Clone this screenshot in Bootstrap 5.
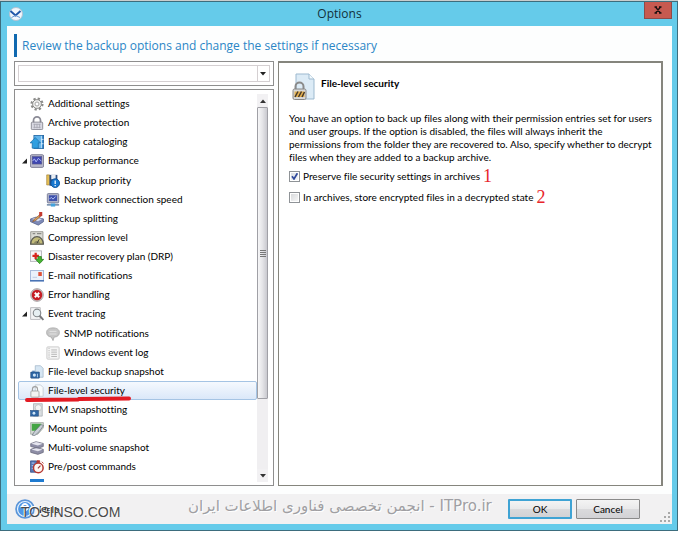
<!DOCTYPE html>
<html lang="en">
<head>
<meta charset="utf-8">
<meta name="viewport" content="width=device-width, initial-scale=1">
<title>Options</title>
<link href="https://cdn.jsdelivr.net/npm/bootstrap@5.3.0/dist/css/bootstrap.min.css" rel="stylesheet">
<style>
  :root { --ui: Lato, "Open Sans", sans-serif; --head: "Open Sans", "Noto Sans", sans-serif; }
  body { font: 10px/13px var(--ui); font-variant-ligatures: none; color: #000; background: #fff; border-top: 1px solid #c9cdcd; padding-bottom: 2px; }
  .dialog { background: #65cbea; border: 1px solid #3d6d7d; padding: 0 5px 6px 6px; }
  .titlebar { height: 24px; padding: 0 0 0 2px; }
  .titlebar h1 { font: 12px/24px var(--head); color: #12303b; }
  .close-btn { position: absolute; top: 0; right: 0; width: 28px; height: 17px; background: #c75a50; border: 1px solid #8f4a48; border-top: 0; }
  .client { background: #fdfefe; }
  .banner { margin: 8px 8px 4px 7px; }
  .banner h2 { font: 12px/23px var(--head); color: #2b86c6; border-left: 3px solid #0f69b0; padding-left: 5px; }
  .panes { padding: 0 9px 8px 7px; gap: 4px; }
  .left-pane { flex: 0 0 260px; gap: 3px; }
  .frame { border: 1px solid #8e8e8e; background: #fff; }
  .detail { border: 2px solid #85857d; border-width: 2px 2px 1px 1px; padding: 10px 7px 10px 10px; }
  .combo { margin: 3px; border: 1px solid #d5d0d2; height: 17px; }
  .combo input { border: 0; outline: 0; font-size: 10px; }
  .combo button { width: 13px; border: 0; border-left: 1px solid #d5d0d2; background: #fff; }
  .tree { padding: 4px 5px 3px 3px; }
  .tree-view { flex: 1 1 0; min-height: 0; }
  .tree-row { height: 19px; padding: 0 2px; color: #000; }
  .twist { width: 8px; height: 8px; margin-right: 2px; }
  .ico { width: 14px; height: 14px; margin-right: 4px; }
  .tree-sub { padding-left: 16px; margin: 1px 0 0; }
  .tree-row.chosen { padding: 0 1px; border: 1px solid #a5c4e4; border-radius: 2px; background: linear-gradient(#f5f9fe, #dbe8f9); }
  .pen { position: absolute; left: 7px; top: 15px; width: 106px; height: 6px; }
  .sbar { width: 11px; background: #f0eff1; }
  .sbar button { height: 13px; border: 0; background: #f2f1f3; line-height: 0; }
  .sthumb { flex: 0 0 292px; background: linear-gradient(90deg, #f7f7f8, #e4e4e7 50%, #c9c9cf); border: 1px solid #a0a0a6; border-radius: 1px; }
  .detail h3 { font-size: 10px; line-height: 13px; color: #000; }
  .detail p { line-height: 13px; margin: 11px 0 6px; }
  .doc-ico { width: 24px; height: 28px; margin: 0 5px 0 3px; }
  .opt { height: 13px; margin-bottom: 8px; gap: 3px; }
  .opt input { appearance: none; width: 11px; height: 11px; border: 1px solid #8f9397; background: linear-gradient(135deg, #d4d6d9, #fafafa); margin: 0; outline: 1px solid #fff; outline-offset: -2px; }
  .opt input:checked { background: url("data:image/svg+xml,%3Csvg xmlns='http://www.w3.org/2000/svg' viewBox='0 0 9 9'%3E%3Cpath d='M2 4.2 4 7 7.4 1.2' fill='none' stroke='%23304a9c' stroke-width='1.7'/%3E%3C/svg%3E"), linear-gradient(135deg, #d8dde2, #fafafa); }
  .num { font: 18px/13px "Liberation Serif", serif; color: #e8252b; }
  .foot { height: 30px; background: #f2f1f2; padding: 0 32px 0 8px; gap: 4px; }
  .dlg-btn { font-size: 10px; line-height: 15px; width: 64px; height: 20px; padding: 0; border: 1px solid #8a8a8a; border-radius: 1px; background: linear-gradient(#f4f4f4, #e9e9ea 48%, #dadadc 52%, #d2d2d5); color: #000; }
  .dlg-btn.default { border: 2px solid #3fa3d4; }
  .site-mark { position: absolute; left: 187px; bottom: 14px; font: 15px/20px "DejaVu Sans", sans-serif; color: #a09fa3; text-shadow: 1px 1px 0 #fff; white-space: nowrap; }
  .owner-mark { position: absolute; left: 20px; bottom: 9px; font: 14px/18px "Liberation Sans", sans-serif; color: #4a4a4a; text-shadow: -1px -1px 0 #fff; }
  .help-link { color: #000; }
  .grip { position: absolute; right: 2px; bottom: 2px; width: 10px; height: 10px; }
</style>
</head>
<body class="vh-100 d-flex flex-column overflow-hidden">
<svg class="d-none" aria-hidden="true">
  <symbol id="i-gear" viewBox="0 0 16 16"><circle cx="8" cy="8" r="6.300" fill="none" stroke="#8a8a88" stroke-width="2.400" stroke-dasharray="2.600 2.350"/><circle cx="8" cy="8" r="5" fill="#f0f0ee" stroke="#80807e"/><circle cx="8" cy="8" r="2.300" fill="#fff" stroke="#999"/></symbol>
  <symbol id="i-lock" viewBox="0 0 16 16"><path d="M4 8V5a4 4 0 0 1 8 0v3" fill="none" stroke="#8b8b96" stroke-width="2"/><rect x="1.5" y="7" width="13" height="8.5" rx="1" fill="#d9d9e2" stroke="#85858f"/><path d="M4 9.5h8M4 13h8M5 9v5M8 9v5M11 9v5" stroke="#a8a8b4"/></symbol>
  <symbol id="i-catalog" viewBox="0 0 16 16"><rect x="4.500" y=".6" width="11" height="14.800" fill="#3a8ed2" stroke="#2466a0"/><rect x="5" y="1" width="8" height="14" fill="#5fb2ea"/><path d="M13 1v14M12.500 5h3M12.500 10h3" stroke="#d5edfb"/><path d="M0 9 6 3l6 6H9.500v6h-7V9z" fill="#2f9fe0" stroke="#176ba8" stroke-width=".8"/></symbol>
  <symbol id="i-perf" viewBox="0 0 16 16"><rect x=".5" y=".8" width="15" height="14.500" rx="1.500" fill="#b9b9cc" stroke="#77778f"/><rect x="2.500" y="2.800" width="11" height="8.700" fill="#3f46b0" stroke="#5c5c80" stroke-width=".6"/><path d="m3 8 2-2.500L7 9l2.500-4L13 8" fill="none" stroke="#b9c5ff"/></symbol>
  <symbol id="i-prio" viewBox="0 0 16 16"><path d="M.8 1h3.200v11.500H.8z" fill="#e6bf55" stroke="#9d7a30" stroke-width=".7"/><path d="M4 1h9v12.500H4z" fill="#2f4f80"/><path d="M6 1h5v5H6z" fill="#e9eef5"/><circle cx="10.500" cy="10.500" r="5" fill="#1777cf" stroke="#0c4f96"/><path d="M10.500 7.500v4M10.500 12.500V14" stroke="#fff" stroke-width="1.400"/></symbol>
  <symbol id="i-net" viewBox="0 0 16 16"><rect x="1.500" y=".7" width="13" height="10.600" rx="1" fill="#b5b8ca" stroke="#747892"/><rect x="3.300" y="2.600" width="9.400" height="6.600" fill="#3d50ac"/><path d="m4 7 2-2 2 2 3-3" fill="none" stroke="#c6d4ff"/><path d="M1 13.500h14" stroke="#7d93b0" stroke-width="2"/><path d="M5.500 12h5v3.500h-5z" fill="#43a2dc"/></symbol>
  <symbol id="i-split" viewBox="0 0 16 16"><path d="m.5 8 6-2 9 2v3l-6 4-9-4z" fill="#7d8ab8" stroke="#515b83" stroke-width=".8"/><path d="m1 8 6-2 8 2-6 3z" fill="#dbe2f2" stroke="#6672a0" stroke-width=".7"/><path d="M12 2v3L6 10l-3 1 2-3 5-4z" fill="#d8a05b" stroke="#804d28" stroke-width=".7"/><path d="M10.500 0h3.500v4.500l-3.500 1z" fill="#c43a30"/></symbol>
  <symbol id="i-comp" viewBox="0 0 16 16"><path d="M.8.8h14V15h-14z" fill="#dcdcd6" stroke="#94948e"/><path d="M3 3h3M8 3h5" stroke="#8a8a86" stroke-width="1.500"/><path d="M.7 15a7.300 8.500 0 0 1 14.600 0z" fill="#c2bb7a" stroke="#5e5e55" stroke-width="1.500"/><path d="M4.500 15a3.500 3.500 0 0 1 7 0z" fill="#8a8662"/><path d="m8 14 2.500-4.500" stroke="#3a3a34"/></symbol>
  <symbol id="i-drp" viewBox="0 0 16 16"><rect x=".6" y="1" width="12.500" height="12" fill="#f6f6f8" stroke="#b2b2b8"/><path d="M6.500 3v7.500M2.800 6.700h7.400" stroke="#d9251c" stroke-width="2.600"/><path d="M9 7.500h4v3.200h2.700L11 15.600l-4.700-4.900H9z" fill="#46b432" stroke="#237a17" stroke-width=".8"/></symbol>
  <symbol id="i-mail" viewBox="0 0 16 16"><rect x=".5" y="1.800" width="15" height="12" fill="#eaf1fb" stroke="#9db2d6"/><path d="M0 13.400h16" stroke="#4a74b5" stroke-width="1.600"/><rect x="9.500" y="3.500" width="4" height="4.500" fill="#de5038"/><path d="M3 9.500h5" stroke="#b9c8e0"/></symbol>
  <symbol id="i-error" viewBox="0 0 16 16"><circle cx="8" cy="8" r="7.300" fill="#c8c0c1" stroke="#9c9496" stroke-width=".8"/><circle cx="8" cy="8" r="6" fill="#c51d24"/><path d="m5.500 5.500 5 5m0-5-5 5" stroke="#fff" stroke-width="2.300"/></symbol>
  <symbol id="i-trace" viewBox="0 0 16 16"><path d="M.7.7h11v13.500h-11z" fill="#f4f4f5" stroke="#b5b5b8"/><circle cx="8" cy="6.800" r="4.300" fill="#e6eef2" fill-opacity=".9" stroke="#84898c" stroke-width="1.300"/><path d="m11 10 4.300 4.800" stroke="#77777a" stroke-width="2.200"/></symbol>
  <symbol id="i-snmp" viewBox="0 0 16 16"><path d="M8 1c4.500 0 7.300 2 7.300 5.200s-2.300 5.300-6 5.300L8 15.500l-2-4C3 11 .7 9.500.7 6.200 .7 3 3.500 1 8 1z" fill="#c6c6c6" stroke="#aaa"/><path d="M4 5h8M4 8h8" stroke="#e6e6e6"/></symbol>
  <symbol id="i-log" viewBox="0 0 16 16"><rect x="1" y="1" width="14" height="14" rx="1" fill="#f5f5f5" stroke="#c6c6c6"/><path d="M6 4.500h6.500M6 7h6.500M6 9.500h6.500M6 12h6.500" stroke="#b0b0b0"/><path d="M3.500 2v12" stroke="#ccc" stroke-width="1.600" stroke-dasharray="1.500 1"/></symbol>
  <symbol id="i-snap" viewBox="0 0 16 16"><path d="M6 .8h6l3 3V14H6z" fill="#d6e6f3" stroke="#9db3c6" stroke-width=".8"/><rect x=".8" y="8" width="10" height="7" rx=".5" fill="#2f66a4" stroke="#1d4577" stroke-width=".6"/><path d="M2.500 8V6.500h3V8" fill="#5480b2"/><circle cx="5" cy="11.500" r="1.800" fill="#cfe4f6"/><path d="M8.500 10v4" stroke="#bcd7f0"/></symbol>
  <symbol id="i-sec" viewBox="0 0 16 16"><path d="M6 1h6l3 3v10H6z" fill="#f8fbfd" stroke="#c3ccd3"/><path d="M2.800 8V6a2.900 3 0 0 1 5.800 0v2" fill="none" stroke="#a0a0a0" stroke-width="1.300"/><rect x="1" y="8" width="9.300" height="7" rx="1" fill="#f3f3f1" stroke="#a3a3a0"/></symbol>
  <symbol id="i-lvm" viewBox="0 0 16 16"><path d="M4 .8h10v14.200H4z" fill="#d9dde0" stroke="#a2a8ac" stroke-width=".8"/><circle cx="9.500" cy="5.500" r="3.600" fill="#f3f5f4" stroke="#b3b9b6" stroke-width=".8"/><rect x=".6" y="8.500" width="9" height="6.500" fill="#2f66a4" stroke="#1d4577" stroke-width=".6"/><circle cx="4.500" cy="11.700" r="1.600" fill="#cfe4f6"/></symbol>
  <symbol id="i-mount" viewBox="0 0 16 16"><path d="M.7.700h14.600v6L9 14H.7z" fill="#d4d9d4" stroke="#98a298" stroke-width=".8"/><path d="M2 2h11l-5 8H2z" fill="#43a544"/><path d="m5 11 7.500-8 3 1-5 7-5 4.500-3-.5z" fill="#c9cfd6" stroke="#69717c" stroke-width=".8"/></symbol>
  <symbol id="i-multi" viewBox="0 0 16 16"><path d="m.8 3 6-2.200 8.400 2v3.500L9 8.400.8 6.300z" fill="#8e8ea6" stroke="#666679" stroke-width=".8"/><path d="m.8 9.500 6-2 8.400 2V13L9 15.300.8 13z" fill="#8e8ea6" stroke="#666679" stroke-width=".8"/><path d="m1.500 3.200 5.500-2 7.500 1.800L9 5zM1.500 9.700l5.500-1.500 7.500 1.500L9 11.700z" fill="#e5e5ee"/></symbol>
  <symbol id="i-prepost" viewBox="0 0 16 16"><path d="M.6 1h7v13h-7z" fill="#5478b8" stroke="#2a427b" stroke-width=".8"/><path d="M2 3.500h3M2 6.500h2M2 9.500h2" stroke="#c2d3f3"/><circle cx="9.500" cy="9" r="5.500" fill="#fdf6f2" stroke="#b63730" stroke-width="1.700"/><path d="M8 .8h3v2H8zM13.500 2l2 2" stroke="#b63730" fill="#b63730"/><path d="M9 9.500 12 6.500" stroke="#933" stroke-width="1.300"/></symbol>
  <symbol id="i-last" viewBox="0 0 16 16"><path d="M0 0h16v14H0z" fill="#1f7bd0"/></symbol>
  <symbol id="i-open" viewBox="0 0 8 8"><path d="M7 1.500v5H2z" fill="#222"/></symbol>
</svg>

<main class="dialog flex-grow-1 d-flex flex-column position-relative">
  <header class="titlebar position-relative d-flex align-items-center">
    <svg width="14" height="14" viewBox="0 0 14 14" aria-hidden="true"><circle cx="7" cy="7" r="6.500" fill="#f2f7fc" stroke="#b3c2d2"/><path d="m1.500 4 5 4.500L11.500 4" fill="none" stroke="#2056a8" stroke-width="1.900"/><path d="M2.500 10.500 6.500 8.500l4.500 2" fill="none" stroke="#6c9ad4"/></svg>
    <h1 class="m-0 flex-grow-1 text-center fw-normal pe-3">Options</h1>
    <button type="button" class="close-btn p-0 d-flex align-items-center justify-content-center" aria-label="Close"><svg width="8" height="8" viewBox="0 0 8 8"><path d="m1.500 1 5 6m0-6-5 6M.5 1h2.500M5 1h2.500M.5 7H3M5 7h2.500" stroke="#1c1010" stroke-width="1.300"/></svg></button>
  </header>

  <div class="client flex-grow-1 d-flex flex-column">
    <div class="banner"><h2 class="m-0 fw-normal">Review the backup options and change the settings if necessary</h2></div>

    <div class="panes flex-grow-1 d-flex">
      <div class="left-pane d-flex flex-column">
        <div class="frame">
          <div class="combo d-flex"><input class="flex-grow-1 p-0 w-100" type="text" aria-label="Search options"><button type="button" class="p-0 d-flex align-items-center justify-content-center" aria-label="Show list"><svg width="6" height="4" viewBox="0 0 6 4"><path d="M0 0h6L3 3.500z" fill="#222"/></svg></button></div>
        </div>
        <nav class="frame tree flex-grow-1 d-flex" aria-label="Option pages">
          <div class="flex-grow-1 d-flex flex-column">
          <ul class="tree-view list-unstyled m-0 overflow-hidden">
            <li><a href="#" class="tree-row d-flex align-items-center text-decoration-none"><span class="twist"></span><svg class="ico"><use href="#i-gear"/></svg>Additional settings</a></li>
            <li><a href="#" class="tree-row d-flex align-items-center text-decoration-none"><span class="twist"></span><svg class="ico"><use href="#i-lock"/></svg>Archive protection</a></li>
            <li><a href="#" class="tree-row d-flex align-items-center text-decoration-none"><span class="twist"></span><svg class="ico"><use href="#i-catalog"/></svg>Backup cataloging</a></li>
            <li><a href="#" class="tree-row d-flex align-items-center text-decoration-none"><svg class="twist"><use href="#i-open"/></svg><svg class="ico"><use href="#i-perf"/></svg>Backup performance</a>
              <ul class="tree-sub list-unstyled">
                <li><a href="#" class="tree-row d-flex align-items-center text-decoration-none"><span class="twist"></span><svg class="ico"><use href="#i-prio"/></svg>Backup priority</a></li>
                <li><a href="#" class="tree-row d-flex align-items-center text-decoration-none"><span class="twist"></span><svg class="ico"><use href="#i-net"/></svg>Network connection speed</a></li>
              </ul></li>
            <li><a href="#" class="tree-row d-flex align-items-center text-decoration-none"><span class="twist"></span><svg class="ico"><use href="#i-split"/></svg>Backup splitting</a></li>
            <li><a href="#" class="tree-row d-flex align-items-center text-decoration-none"><span class="twist"></span><svg class="ico"><use href="#i-comp"/></svg>Compression level</a></li>
            <li><a href="#" class="tree-row d-flex align-items-center text-decoration-none"><span class="twist"></span><svg class="ico"><use href="#i-drp"/></svg>Disaster recovery plan (DRP)</a></li>
            <li><a href="#" class="tree-row d-flex align-items-center text-decoration-none"><span class="twist"></span><svg class="ico"><use href="#i-mail"/></svg>E-mail notifications</a></li>
            <li><a href="#" class="tree-row d-flex align-items-center text-decoration-none"><span class="twist"></span><svg class="ico"><use href="#i-error"/></svg>Error handling</a></li>
            <li><a href="#" class="tree-row d-flex align-items-center text-decoration-none"><svg class="twist"><use href="#i-open"/></svg><svg class="ico"><use href="#i-trace"/></svg>Event tracing</a>
              <ul class="tree-sub list-unstyled">
                <li><a href="#" class="tree-row d-flex align-items-center text-decoration-none"><span class="twist"></span><svg class="ico"><use href="#i-snmp"/></svg>SNMP notifications</a></li>
                <li><a href="#" class="tree-row d-flex align-items-center text-decoration-none"><span class="twist"></span><svg class="ico"><use href="#i-log"/></svg>Windows event log</a></li>
              </ul></li>
            <li><a href="#" class="tree-row d-flex align-items-center text-decoration-none"><span class="twist"></span><svg class="ico"><use href="#i-snap"/></svg>File-level backup snapshot</a></li>
            <li class="position-relative"><a href="#" class="tree-row chosen d-flex align-items-center text-decoration-none" aria-current="page"><span class="twist"></span><svg class="ico"><use href="#i-sec"/></svg>File-level security</a>
              <svg class="pen z-1" viewBox="0 0 106 6" aria-hidden="true"><path d="M2 4 53 3.500 54 3l50-.5" fill="none" stroke="#e31b23" stroke-width="4" stroke-linecap="round"/></svg></li>
            <li><a href="#" class="tree-row d-flex align-items-center text-decoration-none"><span class="twist"></span><svg class="ico"><use href="#i-lvm"/></svg>LVM snapshotting</a></li>
            <li><a href="#" class="tree-row d-flex align-items-center text-decoration-none"><span class="twist"></span><svg class="ico"><use href="#i-mount"/></svg>Mount points</a></li>
            <li><a href="#" class="tree-row d-flex align-items-center text-decoration-none"><span class="twist"></span><svg class="ico"><use href="#i-multi"/></svg>Multi-volume snapshot</a></li>
            <li><a href="#" class="tree-row d-flex align-items-center text-decoration-none"><span class="twist"></span><svg class="ico"><use href="#i-prepost"/></svg>Pre/post commands</a></li>
            <li><a href="#" class="tree-row d-flex align-items-center text-decoration-none" aria-label="More"><span class="twist"></span><svg class="ico"><use href="#i-last"/></svg></a></li>
          </ul>
          </div>
          <div class="sbar d-flex flex-column">
            <button type="button" class="p-0" aria-label="Scroll up"><svg width="6" height="4" viewBox="0 0 6 4"><path d="M0 4h6L3 .5z" fill="#333"/></svg></button>
            <div class="sthumb d-flex align-items-center justify-content-center"><svg width="6" height="7" viewBox="0 0 6 7"><path d="M0 .5h6M0 2.500h6M0 4.500h6M0 6.500h6" stroke="#777"/></svg></div>
            <button type="button" class="p-0 mt-auto" aria-label="Scroll down"><svg width="6" height="4" viewBox="0 0 6 4"><path d="M0 0h6L3 3.500z" fill="#333"/></svg></button>
          </div>
        </nav>
      </div>

      <section class="frame detail flex-grow-1">
        <div class="d-flex align-items-start">
          <svg class="doc-ico" viewBox="0 0 24 28" aria-hidden="true"><path d="M4 1h13l5 5v20H4z" fill="#dcebf6" stroke="#9db9cf"/><path d="M17 1v5h5" fill="#f2f9fd" stroke="#9db9cf"/><path d="M3.500 16v-2.500a4 4 0 0 1 8 0V16" fill="none" stroke="#8a8a8a" stroke-width="2"/><rect x="1" y="16" width="13" height="10.500" rx="1.500" fill="#d8d8d8" stroke="#888"/><path d="M2.500 18.500h10v5.500h-10z" fill="#e3b04f"/><path d="m3 24 3-5.500M6.500 24l3-5.500M10 24l2.500-5" stroke="#47392a" stroke-width="1.500"/></svg>
          <h3 class="fw-bold m-0 pt-1">File-level security</h3>
        </div>
        <p>You have an option to back up files along with their permission entries set for users and user groups. If the option is disabled, the files will always inherit the permissions from the folder they are recovered to. Also, specify whether to decrypt files when they are added to a backup archive.</p>
        <div class="opt d-flex align-items-center"><input type="checkbox" id="keep" checked><label for="keep">Preserve file security settings in archives</label><span class="num">1</span></div>
        <div class="opt d-flex align-items-center"><input type="checkbox" id="plain"><label for="plain">In archives, store encrypted files in a decrypted state</label><span class="num">2</span></div>
      </section>
    </div>

    <footer class="foot position-relative d-flex align-items-center">
      <a href="#" class="help-link d-flex align-items-center gap-1 text-decoration-none"><svg width="20" height="20" viewBox="0 0 20 20" aria-hidden="true"><circle cx="10" cy="10" r="8.800" fill="#3d8ae0" stroke="#5b95d8" stroke-width="2"/><circle cx="10" cy="10" r="7.500" fill="#4f97e6" stroke="#e9f3fd" stroke-width="1.200"/><path d="M7 8a3 3 0 1 1 4.500 2.600Q10 11.400 10 13M10 14v1.500" fill="none" stroke="#fff" stroke-width="1.800"/></svg>Help</a>
      <button type="button" class="dlg-btn default ms-auto">OK</button>
      <button type="button" class="dlg-btn">Cancel</button>
      <svg class="grip" viewBox="0 0 10 10" aria-hidden="true"><path d="M8 1h2M8 5h2M4 5h2M8 9h2M4 9h2M0 9h2" stroke="#a9a9a9" stroke-width="2"/></svg>
    </footer>
  </div>
  <div class="site-mark" dir="rtl" lang="fa">ITPro.ir - انجمن تخصصی فناوری اطلاعات ایران</div>
  <div class="owner-mark">TOSINSO.COM</div>
</main>
<script src="https://cdn.jsdelivr.net/npm/bootstrap@5.3.0/dist/js/bootstrap.bundle.min.js"></script>
</body>
</html>
